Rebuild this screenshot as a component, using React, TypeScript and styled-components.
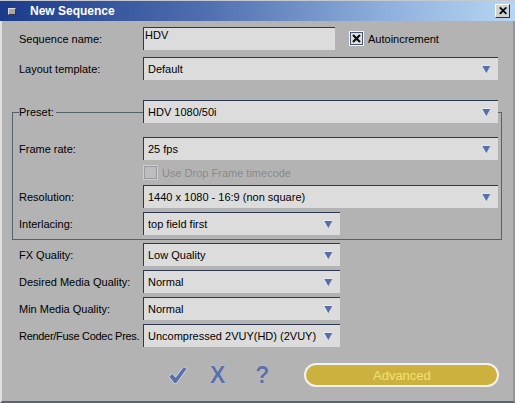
import React from 'react';
import styled, { createGlobalStyle } from 'styled-components';

const GlobalStyle = createGlobalStyle`
  html, body {
    margin: 0;
    padding: 0;
    background: #b3b3b3;
  }
  body {
    font-family: 'Liberation Sans', Arial, sans-serif;
    font-size: 11px;
    color: #000;
  }
`;

const Window = styled.div`
  width: 515px;
  height: 403px;
  display: flex;
  flex-direction: column;
  background: #b3b3b3;
`;

const TitleBar = styled.div`
  height: 20px;
  border-top: 1px solid #c4c8d0;
  display: flex;
  align-items: center;
  background: linear-gradient(90deg, #1b3a8a 0%, #4f6fb0 40%, #8fb0dc 75%, #b6d6f2 100%);
`;

const TitleIcon = styled.div`
  width: 6px;
  height: 5px;
  margin-left: 8px;
  border: 1px solid #303848;
  border-top-color: #d8d8d8;
  border-left-color: #d8d8d8;
  background: #a8a8a8;
`;

const TitleText = styled.div`
  margin-left: 14px;
  font-weight: bold;
  font-size: 12px;
  color: #fff;
  flex: 1;
`;

const CloseButton = styled.div`
  width: 13px;
  height: 12px;
  margin-right: 5px;
  border: 1px solid #fff;
  border-right-color: #303030;
  border-bottom-color: #303030;
  background: #d4d2cc;
  display: flex;
  align-items: center;
  justify-content: center;
  font-weight: bold;
  font-size: 12px;
  line-height: 12px;
`;

const Body = styled.div`
  flex: 1;
  display: flex;
  flex-direction: column;
  padding: 6px 11px 0 10px;
  border-left: 2px solid #e0e0e0;
  border-right: 2px solid #8e949c;
  border-bottom: 2px solid #566474;
`;

const Row = styled.div<{ $gap?: number }>`
  display: flex;
  align-items: center;
  margin-top: ${(p) => p.$gap ?? 0}px;
  padding: 0 4px 0 7px;
`;

const Label = styled.div<{ $tight?: boolean }>`
  flex: 0 0 124px;
  white-space: nowrap;
  overflow: hidden;
  letter-spacing: ${(p) => (p.$tight ? '-0.3px' : 'normal')};
`;

const LegendText = styled.span`
  background: #b3b3b3;
  padding: 0 2px;
  margin-left: -2px;
`;

const Field = styled.div<{ $width?: number }>`
  box-sizing: border-box;
  height: 23px;
  ${(p) => (p.$width ? `width: ${p.$width}px;` : 'flex: 1;')}
  background: #dcdcdc;
  border-top: 1px solid #2c3850;
  border-left: 1px solid #2c3850;
  display: flex;
  align-items: center;
  padding: 0 7px 0 4px;
`;

const TextInput = styled(Field)`
  align-items: flex-start;
  padding: 1px 0 0 1px;
`;

const FieldValue = styled.span`
  flex: 1;
  white-space: nowrap;
  overflow: hidden;
`;

const CheckLabel = styled.label<{ $disabled?: boolean; $offset?: number }>`
  display: flex;
  align-items: center;
  gap: 4px;
  margin-left: ${(p) => p.$offset ?? 0}px;
  color: ${(p) => (p.$disabled ? '#8a8a8a' : '#000')};
`;

const CheckBox = styled.span<{ $disabled?: boolean }>`
  box-sizing: border-box;
  width: 15px;
  height: 15px;
  border: 1px solid ${(p) => (p.$disabled ? '#cdcdcd' : '#f4f4f4')};
  box-shadow: inset 0 0 0 1px ${(p) => (p.$disabled ? '#9a9ca2' : '#4a5878')};
  background: ${(p) => (p.$disabled ? '#bdbdbd' : '#e2e2e2')};
  display: flex;
  align-items: center;
  justify-content: center;
`;

const CheckRow = styled.div`
  height: 21px;
  margin-top: 2px;
  display: flex;
  align-items: center;
  padding-left: 124px;
`;

const Group = styled.div`
  margin-top: 32px;
  border: 1px solid #56616e;
  padding-bottom: 4px;

  ${Row} {
    padding: 0 3px 0 6px;
  }
  ${CheckRow} {
    padding-left: 130px;
  }
`;

const LegendRow = styled(Row)`
  margin-top: -13px;
`;

const Toolbar = styled.div`
  margin-top: 16px;
  display: flex;
  align-items: center;
  padding-left: 156px;
`;

const IconButton = styled.div<{ $space?: number }>`
  margin-left: ${(p) => p.$space ?? 0}px;
  display: flex;
  align-items: center;
  justify-content: center;
  height: 24px;
  font-family: 'Liberation Sans', Arial, sans-serif;
  font-weight: bold;
  font-size: 23px;
  color: #5b6fa8;
  text-shadow: 0 0 1px #e4e8f0;
`;

const AdvancedButton = styled.div`
  box-sizing: border-box;
  margin-left: 35px;
  width: 195px;
  height: 24px;
  border: 2px solid #f2f2f2;
  border-radius: 12px;
  background: #cdb13f;
  color: #f2e170;
  font-size: 13px;
  display: flex;
  align-items: center;
  justify-content: center;
`;

const Arrow = () => (
  <svg width="10" height="9" viewBox="0 0 10 9">
    <polygon points="0.5,0.5 9.5,0.5 5,8.5" fill="#5a6ea6" />
    <polyline points="5,8.5 0.5,0.5 9.5,0.5" fill="none" stroke="#eef2fa" strokeWidth="0.9" />
  </svg>
);

const Select = ({ value, width }: { value: string; width?: number }) => (
  <Field $width={width}>
    <FieldValue>{value}</FieldValue>
    <Arrow />
  </Field>
);

const CrossMark = () => (
  <svg width="9" height="9" viewBox="0 0 9 9">
    <path d="M1 1 L8 8 M8 1 L1 8" stroke="#111" strokeWidth="2.2" />
  </svg>
);

const CheckIcon = () => (
  <svg width="20" height="20" viewBox="0 0 20 20">
    <path
      d="M0.8 11.5 L4.5 8.6 L7.6 12.3 L15.6 1.5 L19.2 3.6 L8.4 18.6 L6.4 18.6 Z"
      fill="#5b6fa8"
      stroke="#dfe4ee"
      strokeWidth="0.8"
      strokeLinejoin="round"
    />
  </svg>
);

export default function App() {
  return (
    <>
      <GlobalStyle />
      <Window>
        <TitleBar>
          <TitleIcon />
          <TitleText>New Sequence</TitleText>
          <CloseButton>✕</CloseButton>
        </TitleBar>
        <Body>
          <Row>
            <Label>Sequence name:</Label>
            <TextInput $width={192}>HDV</TextInput>
            <CheckLabel $offset={14}>
              <CheckBox>
                <CrossMark />
              </CheckBox>
              Autoincrement
            </CheckLabel>
          </Row>
          <Row $gap={7}>
            <Label>Layout template:</Label>
            <Select value="Default" />
          </Row>

          <Group>
            <LegendRow>
              <Label>
                <LegendText>Preset:</LegendText>
              </Label>
              <Select value="HDV 1080/50i" />
            </LegendRow>
            <Row $gap={14}>
              <Label>Frame rate:</Label>
              <Select value="25 fps" />
            </Row>
            <CheckRow>
              <CheckLabel $disabled $offset={0}>
                <CheckBox $disabled />
                Use Drop Frame timecode
              </CheckLabel>
            </CheckRow>
            <Row $gap={2}>
              <Label>Resolution:</Label>
              <Select value="1440 x 1080 - 16:9 (non square)" />
            </Row>
            <Row $gap={4}>
              <Label>Interlacing:</Label>
              <Select value="top field first" width={197} />
            </Row>
          </Group>

          <Row $gap={3}>
            <Label>FX Quality:</Label>
            <Select value="Low Quality" width={197} />
          </Row>
          <Row $gap={4}>
            <Label>Desired Media Quality:</Label>
            <Select value="Normal" width={197} />
          </Row>
          <Row $gap={4}>
            <Label>Min Media Quality:</Label>
            <Select value="Normal" width={197} />
          </Row>
          <Row $gap={4}>
            <Label $tight>Render/Fuse Codec Pres.</Label>
            <Select value="Uncompressed 2VUY(HD) (2VUY)" width={197} />
          </Row>

          <Toolbar>
            <IconButton>
              <CheckIcon />
            </IconButton>
            <IconButton $space={22}>X</IconButton>
            <IconButton $space={30}>?</IconButton>
            <AdvancedButton>Advanced</AdvancedButton>
          </Toolbar>
        </Body>
      </Window>
    </>
  );
}
